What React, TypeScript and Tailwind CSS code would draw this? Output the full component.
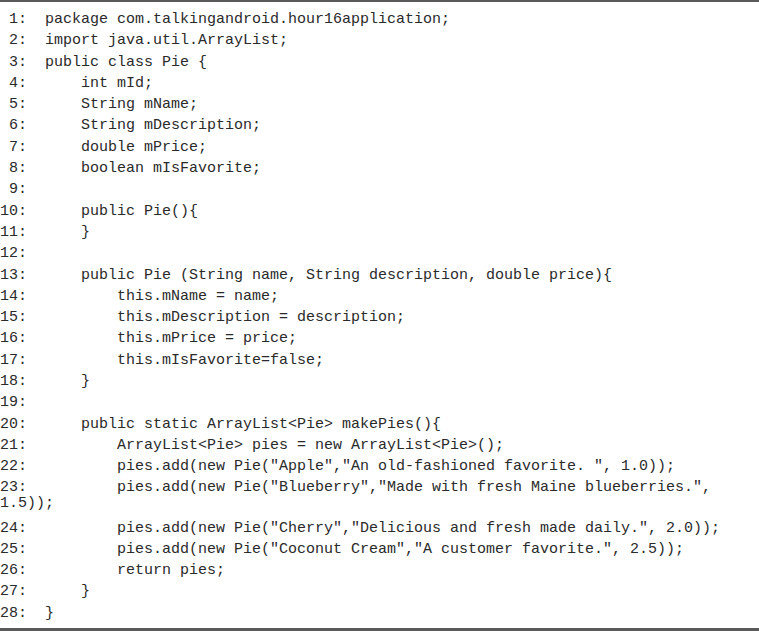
const lines: string[] = [
  "package com.talkingandroid.hour16application;",
  "import java.util.ArrayList;",
  "public class Pie {",
  "    int mId;",
  "    String mName;",
  "    String mDescription;",
  "    double mPrice;",
  "    boolean mIsFavorite;",
  "",
  "    public Pie(){",
  "    }",
  "",
  "    public Pie (String name, String description, double price){",
  "        this.mName = name;",
  "        this.mDescription = description;",
  "        this.mPrice = price;",
  "        this.mIsFavorite=false;",
  "    }",
  "",
  "    public static ArrayList<Pie> makePies(){",
  "        ArrayList<Pie> pies = new ArrayList<Pie>();",
  '        pies.add(new Pie("Apple","An old-fashioned favorite. ", 1.0));',
  '        pies.add(new Pie("Blueberry","Made with fresh Maine blueberries.", 1.5));',
  '        pies.add(new Pie("Cherry","Delicious and fresh made daily.", 2.0));',
  '        pies.add(new Pie("Coconut Cream","A customer favorite.", 2.5));',
  "        return pies;",
  "    }",
  "}",
];

export default function App() {
  return (
    <div className="w-[759px] h-[631px] bg-white border-t-2 border-b-[3px] border-[#5a5a5a] overflow-hidden">
      <pre className="pt-[7px] font-['Courier_New','Nimbus_Mono_PS','FreeMono','Liberation_Mono',monospace] text-[15px] text-[#2a2a2a]">
        {lines.map((code, i) => {
          const n = String(i + 1).padStart(2, " ");
          const text = `${n}:  ${code}`;
          if (i === 22) {
            // line 23 wraps onto a tighter second row
            return (
              <div key={i} className="whitespace-pre-wrap leading-[16px] pt-[2px] pb-[6px]">
                {text}
              </div>
            );
          }
          return (
            <div key={i} className="whitespace-pre-wrap leading-[21.3px]">
              {text}
            </div>
          );
        })}
      </pre>
    </div>
  );
}
